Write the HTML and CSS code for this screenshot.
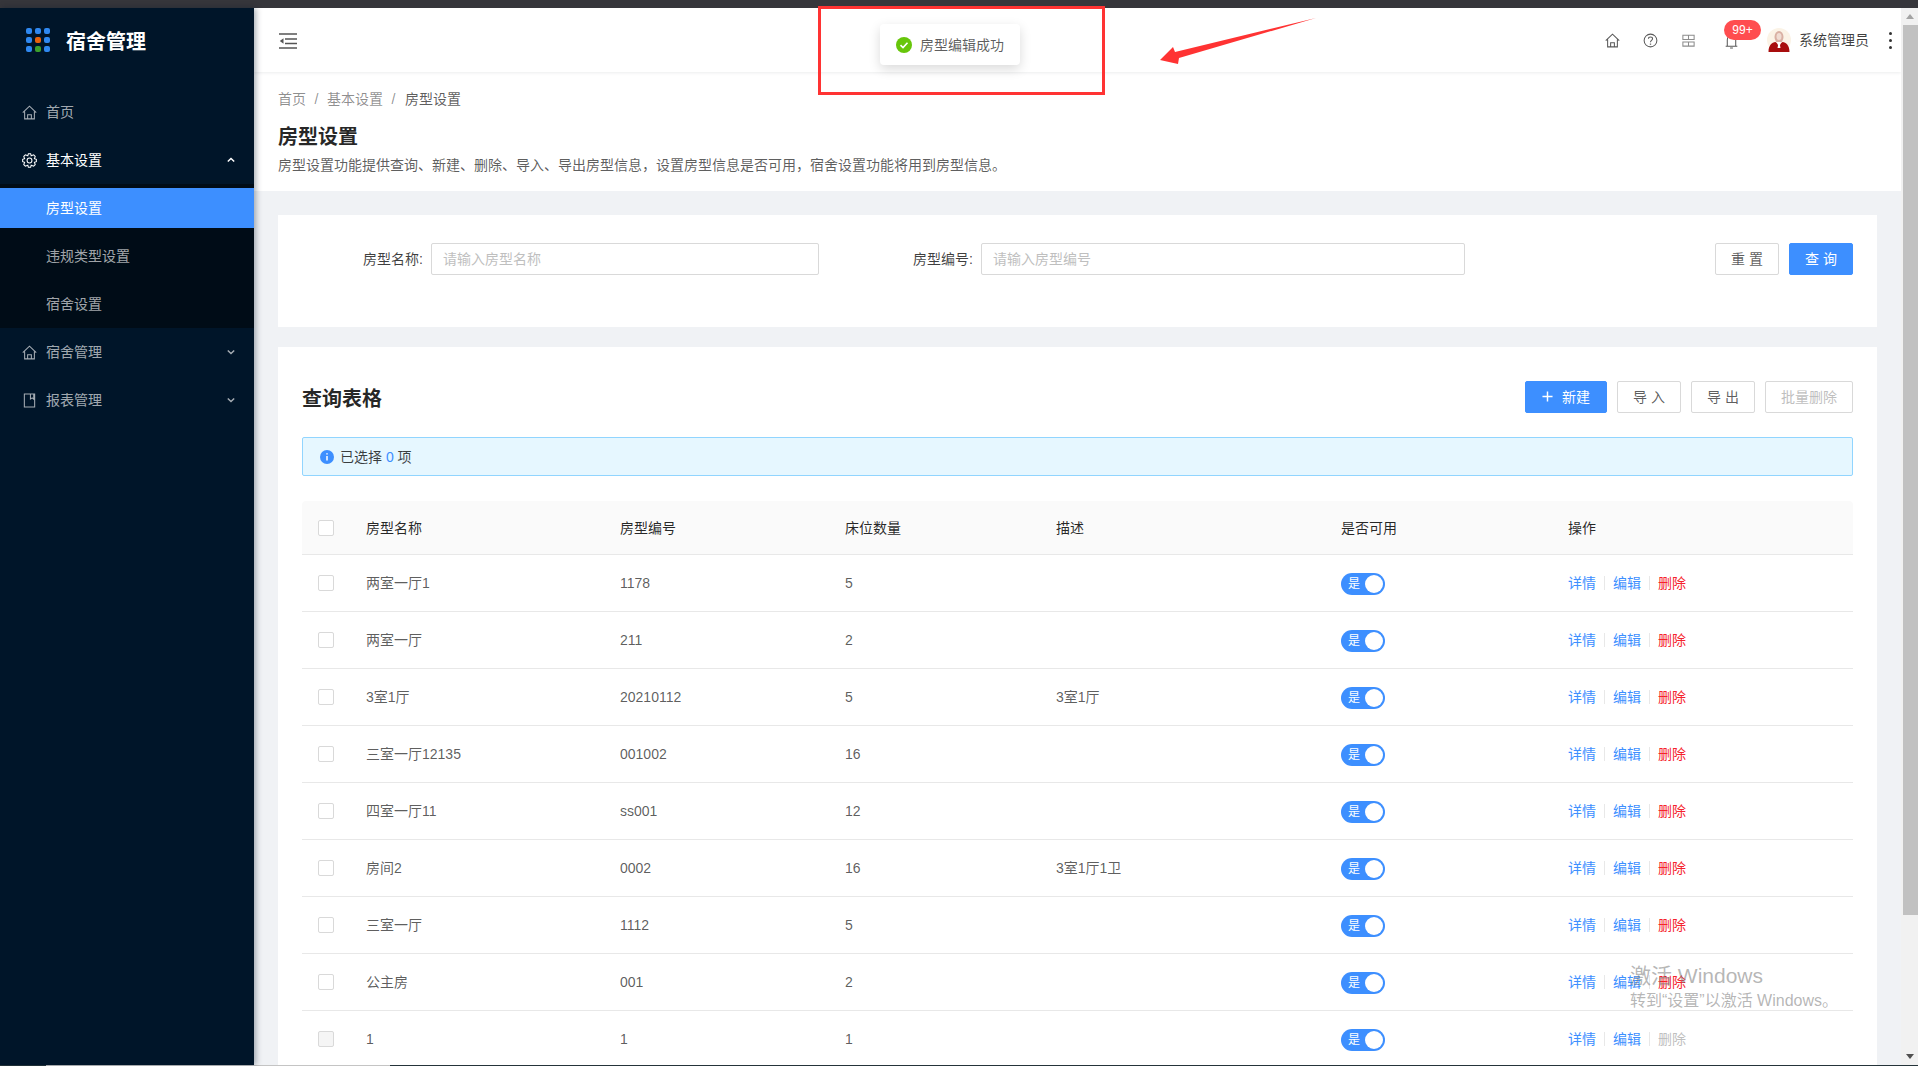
FILE: index.html
```html
<!DOCTYPE html>
<html lang="zh-CN">
<head>
<meta charset="utf-8">
<title>宿舍管理</title>
<link rel="stylesheet" href="styles.css">
</head>
<body>
<div class="app">
  <div class="top-strip"></div>
  <div class="shell">
    <aside class="sidebar">
      <div class="logo">
        <div class="logo-dots">
          <i></i><i></i><i></i>
          <i></i><i class="orange"></i><i></i>
          <i></i><i class="green"></i><i></i>
        </div>
        <span class="logo-text">宿舍管理</span>
      </div>
      <nav class="menu">
        <div class="menu-item">
          <svg class="menu-icon" viewBox="0 0 16 16"><path d="M.8 8.2 8 1.2l7.2 7M2.8 6.8v8h10.4v-8M6 14.8v-4.3h4v4.3"/></svg>
          <span>首页</span>
        </div>
        <div class="menu-item open">
          <svg class="menu-icon" viewBox="0 0 16 16"><path d="M6.8.7h2.4l.6 2.2 2.6-.9 1.7 1.7-.9 2.4 2.1.7v2.4l-2.1.7.9 2.400-1.700 1.700-2.600-.9-.6 2.200H6.800l-.6-2.200-2.600.9-1.700-1.700.9-2.400L.7 9.200V6.800l2.100-.7-.9-2.400L3.600 2l2.600.9z"/><circle cx="8" cy="8" r="2.600"/></svg>
          <span>基本设置</span>
          <svg class="chevron" viewBox="0 0 10 6"><path d="M1 5l4-4 4 4"/></svg>
        </div>
        <div class="submenu">
          <div class="sub-item active">房型设置</div>
          <div class="sub-item">违规类型设置</div>
          <div class="sub-item">宿舍设置</div>
        </div>
        <div class="menu-item">
          <svg class="menu-icon" viewBox="0 0 16 16"><path d="M.8 8.2 8 1.2l7.2 7M2.800 6.800v8h10.400v-8M6 14.800v-4.300h4v4.300"/></svg>
          <span>宿舍管理</span>
          <svg class="chevron" viewBox="0 0 10 6"><path d="M1 1l4 4 4-4"/></svg>
        </div>
        <div class="menu-item">
          <svg class="menu-icon" viewBox="0 0 16 16"><path d="M2.500 1h11v14h-11zM9 1v5.500l1.800-1.300 1.700 1.300V1"/></svg>
          <span>报表管理</span>
          <svg class="chevron" viewBox="0 0 10 6"><path d="M1 1l4 4 4-4"/></svg>
        </div>
      </nav>
    </aside>

    <div class="main">
      <header class="topbar">
        <svg class="collapse-icon" viewBox="0 0 18 16"><path d="M0 1h18M6 6h12M6 10.500h12M0 15h18"/><path class="solid" d="M4.500 5.200v5.600L.8 8z"/></svg>
        <div class="top-tools">
          <svg class="tool" viewBox="0 0 16 16"><path d="M.8 8.200 8 1.200l7.200 7M2.800 6.800v8h10.400v-8M6 14.800v-4.300h4v4.300"/></svg>
          <svg class="tool" viewBox="0 0 16 16"><circle cx="8" cy="8" r="6.800"/><path d="M5.800 6.200C5.800 3.500 10.200 3.500 10.200 6.200c0 1.800-2.200 1.700-2.200 3.600"/><path class="dot" d="M8 11.300v1.200"/></svg>
          <svg class="tool tool-grid" viewBox="0 0 16 16"><path d="M2 2.500h12v4.500H2zM2 9.500h12V14H2zM8 2.500V7M8 9.500V14"/></svg>
          <div class="bell">
            <svg class="tool" viewBox="0 0 16 16"><path d="M3.500 13V6.500C3.500 3.500 5.500 1.500 8 1.500s4.500 2 4.500 5V13M1.800 13h12.400M6.500 15h3"/></svg>
            <span class="badge">99+</span>
          </div>
          <svg class="avatar" viewBox="0 0 24 24"><circle cx="12" cy="12" r="12" fill="#fbf3e6"/><ellipse cx="12" cy="9" rx="4.500" ry="6" fill="#d9b0a3"/><ellipse cx="12" cy="8.500" rx="2.500" ry="3.500" fill="#f0dcd2"/><path d="M1.500 24c0-7 3.500-9.500 7-10l3.500 3 3.500-3c3.500.5 7 3 7 10z" fill="#a80d0d"/><path d="M10 14h4l-1 3.500 .5 2.500h-3l.5-2.500z" fill="#fff"/></svg>
          <span class="user-name">系统管理员</span>
          <div class="kebab"><i></i><i></i><i></i></div>
        </div>
      </header>

      <section class="page-head">
        <div class="crumbs">
          <span>首页</span><em>/</em><span>基本设置</span><em>/</em><span class="current">房型设置</span>
        </div>
        <h1>房型设置</h1>
        <p>房型设置功能提供查询、新建、删除、导入、导出房型信息，设置房型信息是否可用，宿舍设置功能将用到房型信息。</p>
      </section>

      <section class="card search-card">
        <label class="field-label label-a">房型名称:</label>
        <div class="input input-a">请输入房型名称</div>
        <label class="field-label label-b">房型编号:</label>
        <div class="input input-b">请输入房型编号</div>
        <div class="search-actions">
          <button class="btn">重 置</button>
          <button class="btn primary">查 询</button>
        </div>
      </section>

      <section class="card table-card">
        <div class="table-head">
          <h2>查询表格</h2>
          <div class="table-actions">
            <button class="btn primary new"><svg viewBox="0 0 12 12"><path d="M6 .5v11M.5 6h11"/></svg>新建</button>
            <button class="btn">导 入</button>
            <button class="btn">导 出</button>
            <button class="btn disabled wide">批量删除</button>
          </div>
        </div>
        <div class="alert">
          <svg viewBox="0 0 14 14"><circle cx="7" cy="7" r="7" fill="#3d8fff"/><path d="M7 6v4.500M7 3.300v1.300" stroke="#fff" stroke-width="1.500"/></svg>
          <span>已选择 <b>0</b> 项</span>
        </div>
        <table>
          <colgroup>
            <col class="c0"><col class="c1"><col class="c2"><col class="c3"><col class="c4"><col class="c5"><col class="c6">
          </colgroup>
          <thead>
            <tr><th><span class="check"></span></th><th>房型名称</th><th>房型编号</th><th>床位数量</th><th>描述</th><th>是否可用</th><th>操作</th></tr>
          </thead>
          <tbody>
            <tr><td><span class="check"></span></td><td>两室一厅1</td><td>1178</td><td>5</td><td></td><td><span class="switch">是<i></i></span></td><td class="ops"><a>详情</a><s></s><a>编辑</a><s></s><a class="del">删除</a></td></tr>
            <tr><td><span class="check"></span></td><td>两室一厅</td><td>211</td><td>2</td><td></td><td><span class="switch">是<i></i></span></td><td class="ops"><a>详情</a><s></s><a>编辑</a><s></s><a class="del">删除</a></td></tr>
            <tr><td><span class="check"></span></td><td>3室1厅</td><td>20210112</td><td>5</td><td>3室1厅</td><td><span class="switch">是<i></i></span></td><td class="ops"><a>详情</a><s></s><a>编辑</a><s></s><a class="del">删除</a></td></tr>
            <tr><td><span class="check"></span></td><td>三室一厅12135</td><td>001002</td><td>16</td><td></td><td><span class="switch">是<i></i></span></td><td class="ops"><a>详情</a><s></s><a>编辑</a><s></s><a class="del">删除</a></td></tr>
            <tr><td><span class="check"></span></td><td>四室一厅11</td><td>ss001</td><td>12</td><td></td><td><span class="switch">是<i></i></span></td><td class="ops"><a>详情</a><s></s><a>编辑</a><s></s><a class="del">删除</a></td></tr>
            <tr><td><span class="check"></span></td><td>房间2</td><td>0002</td><td>16</td><td>3室1厅1卫</td><td><span class="switch">是<i></i></span></td><td class="ops"><a>详情</a><s></s><a>编辑</a><s></s><a class="del">删除</a></td></tr>
            <tr><td><span class="check"></span></td><td>三室一厅</td><td>1112</td><td>5</td><td></td><td><span class="switch">是<i></i></span></td><td class="ops"><a>详情</a><s></s><a>编辑</a><s></s><a class="del">删除</a></td></tr>
            <tr><td><span class="check"></span></td><td>公主房</td><td>001</td><td>2</td><td></td><td><span class="switch">是<i></i></span></td><td class="ops"><a>详情</a><s></s><a>编辑</a><s></s><a class="del">删除</a></td></tr>
            <tr><td><span class="check off"></span></td><td>1</td><td>1</td><td>1</td><td></td><td><span class="switch">是<i></i></span></td><td class="ops"><a>详情</a><s></s><a>编辑</a><s></s><a class="del off">删除</a></td></tr>
          </tbody>
        </table>
      </section>
    </div>

    <div class="scrollbar">
      <div class="sb-btn"><i class="up"></i></div>
      <div class="sb-thumb"></div>
      <div class="sb-btn end"><i class="down"></i></div>
    </div>
  </div>
  <div class="bottom-strip"><i></i><b></b><u></u></div>

  <div class="toast">
    <svg viewBox="0 0 16 16"><circle cx="8" cy="8" r="8" fill="#67c60a"/><path d="M4.500 8.200 7 10.500l4.500-4.800" fill="none" stroke="#fff" stroke-width="1.600"/></svg>
    <span>房型编辑成功</span>
  </div>
  <div class="mark-box"></div>
  <svg class="mark-arrow" viewBox="0 0 170 56"><path d="M1 43 14 30l2 5L157 1 20 41l-1 6z"/></svg>
  <div class="watermark">
    <div class="wm-1">激活 Windows</div>
    <div class="wm-2">转到“设置”以激活 Windows。</div>
  </div>
</div>
</body>
</html>
```

FILE: styles.css
```css
* { box-sizing: border-box; }
html, body { margin: 0; padding: 0; height: 100%; overflow: hidden; }
body {
  font-family: "Liberation Sans", "Noto Sans CJK SC", sans-serif;
  font-size: 14px;
  line-height: 22px;
  color: rgba(0, 0, 0, .65);
  background: #f0f2f5;
}
.app { position: relative; height: 1066px; display: flex; flex-direction: column; overflow: hidden; }
.top-strip { height: 8px; flex: none; background: #36363b; }
.shell { flex: 1; min-height: 0; display: flex; }
.bottom-strip { height: 1px; flex: none; display: flex; background: #25343a; }
.bottom-strip i { width: 46px; background: #25343a; }
.bottom-strip b { width: 344px; background: #c4c4c4; }
.bottom-strip u { flex: 1; }

/* sidebar */
.sidebar {
  width: 254px; flex: none; background: #001529; color: rgba(255, 255, 255, .65);
  box-shadow: 2px 0 6px rgba(0, 21, 41, .35); position: relative; z-index: 2;
}
.logo { height: 64px; display: flex; align-items: center; padding-left: 26px; margin-bottom: 16px; }
.logo-dots { display: grid; grid-template-columns: repeat(3, 6px); gap: 3px; }
.logo-dots i { height: 6px; border-radius: 2px; background: #2f88f0; }
.logo-dots i.orange { background: #e8620c; }
.logo-dots i.green { background: #3ca02c; }
.logo-text { margin: 4px 0 0 16px; font-size: 20px; font-weight: 700; color: #fff; line-height: 28px; }
.menu-item { height: 48px; display: flex; align-items: center; padding-left: 22px; position: relative; }
.menu-item.open { color: #fff; }
.menu-icon { width: 15px; height: 15px; margin-right: 9px; fill: none; stroke: currentColor; stroke-width: 1.1; }
.chevron { position: absolute; left: 227px; top: 21px; width: 8px; height: 6px; fill: none; stroke: currentColor; stroke-width: 1.8; }
.submenu { background: #000c17; padding: 4px 0; }
.sub-item { height: 40px; line-height: 40px; padding-left: 46px; margin-bottom: 8px; }
.sub-item:last-child { margin-bottom: 0; }
.sub-item.active { background: #3d8fff; color: #fff; }

/* main */
.main { flex: 1; min-width: 0; overflow: hidden; background: #f0f2f5; }
.topbar {
  height: 64px; background: #fff; display: flex; align-items: center; padding-left: 25px;
  box-shadow: 0 1px 3px rgba(0, 21, 41, .08); position: relative; z-index: 1;
}
.collapse-icon { width: 18px; height: 16px; margin-top: 1px; fill: none; stroke: #555; stroke-width: 1.300; }
.collapse-icon .solid { fill: #555; stroke: none; }
.top-tools { margin-left: auto; display: flex; align-items: center; height: 100%; }
.tool { width: 15px; height: 15px; fill: none; stroke: #595959; stroke-width: 1.100; flex: none; }
.tool .dot { stroke-width: 1.400; }
.top-tools > .tool { margin-right: 23px; }
.tool-grid { stroke: #8c8c8c; }
.bell { position: relative; width: 15px; height: 15px; margin: 0 28px 0 5px; }
.badge {
  position: absolute; left: 0; top: -13px; width: 37px; height: 20px; border-radius: 10px;
  background: #ff4d4f; color: #fff; font-size: 12px; line-height: 20px; text-align: center;
}
.avatar { width: 24px; height: 24px; flex: none; }
.user-name { margin-left: 8px; width: 71px; white-space: nowrap; color: rgba(0, 0, 0, .75); }
.kebab { width: 4px; margin: 0 8px 0 19px; display: flex; flex-direction: column; gap: 4px; }
.kebab i { height: 3px; width: 3px; border-radius: 50%; background: #333; }

.page-head { background: #fff; height: 119px; padding: 16px 24px 0; }
.crumbs { height: 22px; color: rgba(0, 0, 0, .45); display: flex; }
.crumbs em { font-style: normal; width: 21px; text-align: center; }
.crumbs .current { color: rgba(0, 0, 0, .65); margin-left: 1px; }
.page-head h1 { margin: 13px 0 0; font-size: 20px; line-height: 28px; font-weight: 700; color: rgba(0, 0, 0, .85); }
.page-head p { margin: 3px 0 0; white-space: nowrap; }

.card { background: #fff; margin: 0 24px 20px; }
.search-card { margin-top: 24px; height: 112px; padding-top: 28px; display: flex; align-items: flex-start; }
.field-label { height: 32px; line-height: 32px; text-align: right; padding-right: 8px; color: rgba(0, 0, 0, .75); white-space: nowrap; }
.label-a { width: 153px; }
.label-b { width: 162px; }
.input {
  height: 32px; line-height: 30px; border: 1px solid #d9d9d9; border-radius: 2px; padding-left: 11px;
  color: #bfbfbf; background: #fff;
}
.input-a { width: 388px; }
.input-b { width: 484px; }
.search-actions { margin-left: auto; margin-right: 24px; display: flex; gap: 10px; }
.btn {
  font: inherit; height: 32px; width: 64px; padding: 0; border: 1px solid #d9d9d9; border-radius: 2px;
  background: #fff; color: rgba(0, 0, 0, .65); line-height: 30px;
}
.btn.primary { background: #3d8fff; border-color: #3d8fff; color: #fff; }
.btn.disabled { color: #bfbfbf; }
.btn.wide { width: 88px; }
.btn.new { width: 82px; display: flex; align-items: center; justify-content: center; }
.btn.new svg { width: 11px; height: 11px; margin-right: 9px; fill: none; stroke: #fff; stroke-width: 1.600; }

.table-card { padding: 34px 24px 0; margin-bottom: 0; }
.table-head { display: flex; justify-content: space-between; align-items: center; height: 32px; margin-bottom: 24px; }
.table-head h2 { margin: 4px 0 0; font-size: 20px; font-weight: 700; line-height: 28px; color: rgba(0, 0, 0, .85); }
.table-actions { display: flex; gap: 10px; margin-top: -1px; }
.alert {
  height: 39px; margin-bottom: 25px; display: flex; align-items: center; padding-left: 17px;
  background: #e6f7ff; border: 1px solid #91d5ff; border-radius: 2px; color: rgba(0, 0, 0, .75);
}
.alert svg { width: 14px; height: 14px; margin-right: 6px; }
.alert b { font-weight: 400; color: #3d8fff; }

table { width: 100%; border-collapse: collapse; table-layout: fixed; }
.c0 { width: 64px; }
.c1 { width: 254px; }
.c2 { width: 225px; }
.c3 { width: 211px; }
.c4 { width: 285px; }
.c5 { width: 227px; }
th {
  height: 53px; padding: 2px 0 0; text-align: left; font-weight: 400; background: #fafafa;
  color: rgba(0, 0, 0, .85); border-bottom: 1px solid #e8e8e8;
}
th:first-child { border-top-left-radius: 4px; padding-left: 16px; }
th:last-child { border-top-right-radius: 4px; }
td { height: 57px; padding: 0; border-bottom: 1px solid #e8e8e8; }
td:first-child { padding-left: 16px; }
.check { display: block; width: 16px; height: 16px; border: 1px solid #d9d9d9; border-radius: 2px; background: #fff; }
.check.off { background: #f5f5f5; }
.switch {
  display: block; position: relative; top: 1px; width: 44px; height: 22px; border-radius: 11px; background: #3d8fff;
  color: #fff; font-size: 12px; line-height: 23px; padding-left: 7px;
}
.switch i { position: absolute; right: 2px; top: 2px; width: 18px; height: 18px; border-radius: 50%; background: #fff; }
.ops { white-space: nowrap; }
.ops a { color: #3d8fff; }
.ops s { display: inline-block; width: 1px; height: 14px; margin: 0 8px; background: #e8e8e8; vertical-align: -2px; }
.ops .del { color: #f5222d; }
.ops .del.off { color: #bfbfbf; }

/* scrollbar */
.scrollbar { width: 17px; flex: none; background: #f1f1f1; display: flex; flex-direction: column; }
.sb-btn { height: 17px; flex: none; display: flex; align-items: center; justify-content: center; }
.sb-btn.end { margin-top: auto; }
.sb-btn .up { border: 4px solid transparent; border-top: 0; border-bottom: 5px solid #a3a3a3; }
.sb-btn .down { border: 4px solid transparent; border-bottom: 0; border-top: 5px solid #505050; }
.sb-thumb { height: 890px; margin: 0 0 0 2px; background: #c1c1c1; }

/* overlays */
.toast {
  position: absolute; left: 880px; top: 24px; width: 140px; height: 41px; z-index: 5; background: #fff;
  border-radius: 4px; box-shadow: 0 4px 12px rgba(0, 0, 0, .15); display: flex; align-items: center; padding-left: 16px;
}
.toast svg { width: 16px; height: 16px; margin-right: 8px; flex: none; }
.toast span { white-space: nowrap; }
.mark-box { position: absolute; left: 818px; top: 6px; width: 287px; height: 89px; border: 3px solid #ff3333; z-index: 6; }
.mark-arrow { position: absolute; left: 1159px; top: 17px; width: 170px; height: 56px; z-index: 6; fill: #ff3333; }
.watermark { position: absolute; left: 1630px; top: 962px; z-index: 7; color: rgba(120, 120, 120, .55); white-space: nowrap; }
.wm-1 { font-size: 21px; line-height: 28px; }
.wm-2 { font-size: 16px; line-height: 20px; margin-top: 1px; }
```
